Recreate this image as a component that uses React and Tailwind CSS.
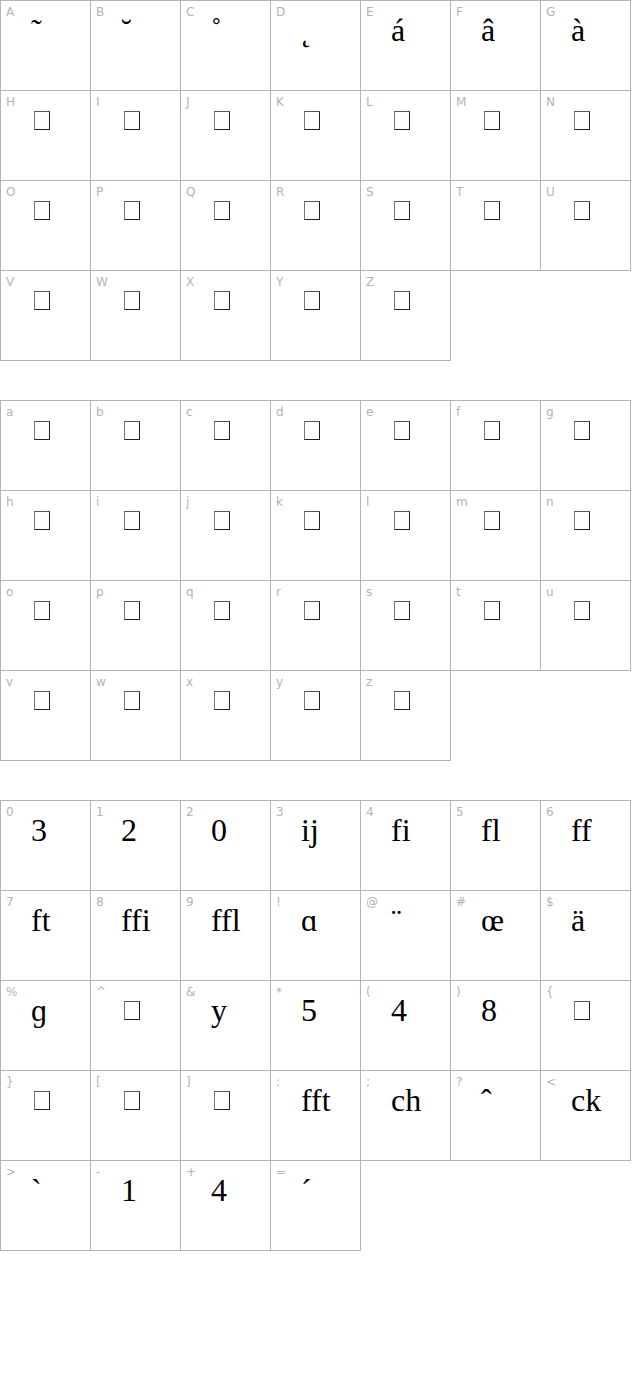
import React from "react";

const S1 = [
  ["A", "\u02DC"], ["B", "\u02D8"], ["C", "\u02DA"], ["D", "\u02DB"], ["E", "á"], ["F", "â"], ["G", "à"],
  ...["H","I","J","K","L","M","N","O","P","Q","R","S","T","U","V","W","X","Y","Z"].map((l) => [l, null]),
];
const S2 = "abcdefghijklmnopqrstuvwxyz".split("").map((l) => [l, null]);
const S3 = [
  ["0", "3"], ["1", "2"], ["2", "0"], ["3", "ij"], ["4", "fi"], ["5", "fl"], ["6", "ff"],
  ["7", "ft"], ["8", "ffi"], ["9", "ffl"], ["!", "\u0251"], ["@", "\u00A8"], ["#", "œ"], ["$", "ä"],
  ["%", "\u0261"], ["^", null], ["&", "y"], ["*", "5"], ["(", "4"], [")", "8"], ["{", null],
  ["}", null], ["[", null], ["]", null], [":", "fft"], [";", "ch"], ["?", "\u02C6"], ["<", "ck"],
  [">", "`"], ["-", "1"], ["+", "4"], ["=", "\u00B4"],
];

function Cell({ label, glyph }) {
  return (
    <div className="w-[91px] h-[91px] border border-[#b4b4b4] bg-white">
      <div className="pt-[5px] pl-[5px] h-[17px] text-[12px] leading-none text-[#b4b4b4] font-['DejaVu_Sans',sans-serif]">
        {label}
      </div>
      {glyph === null ? (
        <div className="mt-[3px] ml-[33px] w-[16px] h-[19px] border border-[#222] border-l-[#777] border-t-[#555]" />
      ) : (
        <div className="-mt-[4px] pl-[30px] text-[32px] leading-none text-black whitespace-nowrap font-['Liberation_Serif',serif]">
          {glyph}
        </div>
      )}
    </div>
  );
}

function Section({ items }) {
  return (
    <div className="grid grid-cols-[repeat(7,90px)] auto-rows-[90px] mb-[40px]">
      {items.map(([l, g], i) => (
        <Cell key={i} label={l} glyph={g} />
      ))}
    </div>
  );
}

export default function App() {
  return (
    <div className="w-[640px] min-h-[1400px] bg-white">
      <Section items={S1} />
      <Section items={S2} />
      <Section items={S3} />
    </div>
  );
}
